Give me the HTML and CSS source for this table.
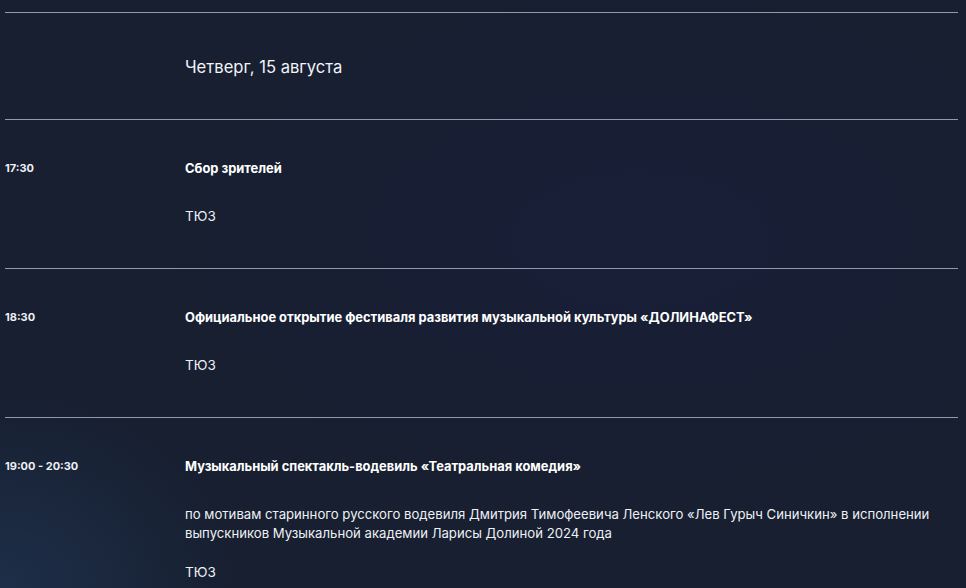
FILE: index.html
```html
<!DOCTYPE html>
<html lang="ru">
<head>
<meta charset="utf-8">
<title>Программа</title>
<link rel="stylesheet" href="styles.css">
</head>
<body>
<div class="schedule">
  <div class="day">
    <div class="day-spacer"></div>
    <h2 class="day-title">Четверг, 15 августа</h2>
  </div>
  <div class="event">
    <div class="event-time">17:30</div>
    <div class="event-body">
      <div class="event-title">Сбор зрителей</div>
      <div class="event-place">ТЮЗ</div>
    </div>
  </div>
  <div class="event">
    <div class="event-time">18:30</div>
    <div class="event-body">
      <div class="event-title">Официальное открытие фестиваля развития музыкальной культуры «ДОЛИНАФЕСТ»</div>
      <div class="event-place">ТЮЗ</div>
    </div>
  </div>
  <div class="event">
    <div class="event-time">19:00 - 20:30</div>
    <div class="event-body">
      <div class="event-title">Музыкальный спектакль-водевиль «Театральная комедия»</div>
      <div class="event-desc">по мотивам старинного русского водевиля Дмитрия Тимофеевича Ленского «Лев Гурыч Синичкин» в исполнении выпускников Музыкальной академии Ларисы Долиной 2024 года</div>
      <div class="event-place">ТЮЗ</div>
    </div>
  </div>
</div>
</body>
</html>
```

FILE: styles.css
```css
html, body {
  margin: 0;
  padding: 0;
  height: 100%;
}
body {
  background-color: #171f30;
  background-image:
    radial-gradient(ellipse 240px 200px at 0px 588px, rgba(40, 70, 110, 0.4), rgba(40, 70, 110, 0) 100%),
    radial-gradient(ellipse 520px 280px at 640px 240px, rgba(30, 28, 80, 0.22), rgba(30, 28, 80, 0) 100%);
  color: #eef0f5;
  font-family: Inter, "Noto Sans", sans-serif;
  overflow: hidden;
}
.schedule {
  margin-left: 5px;
  width: 953px;
  padding-top: 12px;
}
.day,
.event {
  display: flex;
  border-top: 1px solid #9299aa;
}
.day {
  padding: 43px 0 41px;
}
.day-spacer,
.event-time {
  width: 180px;
  flex: none;
}
.day-title {
  margin: 0;
  font-size: 16.6px;
  line-height: 22px;
  font-weight: 400;
  color: #f2f3f7;
}
.event {
  padding: 39px 0 42px;
}
.event-time {
  font-size: 11px;
  line-height: 19px;
  font-weight: 700;
  color: #eef0f5;
}
.event-body {
  flex: 1;
  min-width: 0;
}
.event-title {
  font-size: 12.9px;
  line-height: 19px;
  font-weight: 700;
  color: #ffffff;
}
.event-desc {
  margin-top: 29px;
  font-size: 13.15px;
  line-height: 19px;
  color: #eef0f5;
}
.event-place {
  margin-top: 29px;
  font-size: 13.5px;
  line-height: 19px;
  color: #eef0f5;
}
.event-desc + .event-place {
  margin-top: 20px;
}
```
